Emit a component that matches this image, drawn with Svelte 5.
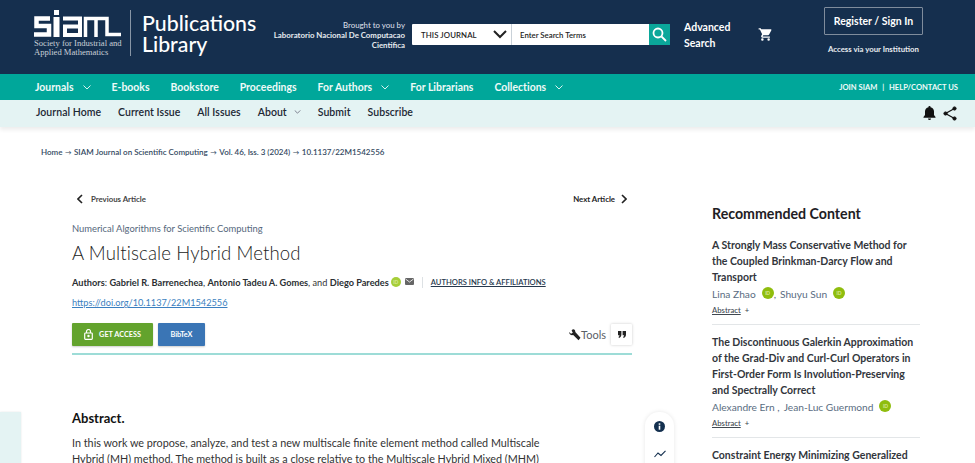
<script>
  const primary = [["Journals", true], ["E-books", false], ["Bookstore", false], ["Proceedings", false], ["For Authors", true], ["For Librarians", false], ["Collections", true]];
  const secondary = [["Journal Home", false], ["Current Issue", false], ["All Issues", false], ["About", true], ["Submit", false], ["Subscribe", false]];
  const crumbs = ["Home", "SIAM Journal on Scientific Computing", "Vol. 46, Iss. 3 (2024)", "10.1137/22M1542556"];
  const recs = [
    { title: "A Strongly Mass Conservative Method for the Coupled Brinkman-Darcy Flow and Transport", authors: ["Lina Zhao", "Shuyu Sun"], ids: [true, true], sep: "," },
    { title: "The Discontinuous Galerkin Approximation of the Grad-Div and Curl-Curl Operators in First-Order Form Is Involution-Preserving and Spectrally Correct", authors: ["Alexandre Ern", "Jean-Luc Guermond"], ids: [false, true], sep: " ," }
  ];
</script>

<div class="page">
  <header class="top">
    <div class="logo">
      <svg width="88" height="27" viewBox="0 0 88 27" fill="none" stroke="#fff">
        <path d="M16 8.500H2.500V16H15V24.500H0" stroke-width="4.500"/>
        <rect x="19.500" y="7" width="6" height="20" fill="#fff" stroke="none"/>
        <rect x="20" y="0" width="5" height="5" fill="#fff" stroke="none"/>
        <path d="M29 8.500H46V25H31V16.500H46" stroke-width="4"/>
        <path d="M51.500 27V8.500H73V24.500H87M62 8.500V27" stroke-width="3.500"/>
      </svg>
      <div class="society">Society for Industrial and<br />Applied Mathematics</div>
    </div>
    <div class="product">Publications<br />Library</div>
    <div class="brought"><span>Brought to you by</span><b>Laboratorio Nacional De Computacao Cientifica</b></div>
    <form class="search">
      <div class="scope">THIS JOURNAL
        <svg width="14" height="9" viewBox="0 0 14 9" fill="none" stroke="#222" stroke-width="2"><path d="M1 1l6 6 6-6"/></svg>
      </div>
      <div class="term">Enter Search Terms</div>
      <div class="go">
        <svg width="15" height="15" viewBox="0 0 15 15" fill="none" stroke="#fff" stroke-width="1.800"><circle cx="6" cy="6" r="4.500"/><path d="M9.500 9.500L14 14"/></svg>
      </div>
    </form>
    <div class="advanced">Advanced<br />Search</div>
    <svg class="cart" width="15" height="15" viewBox="0 0 24 24" fill="#fff"><path d="M7 18a2 2 0 1 0 0 4 2 2 0 0 0 0-4zM1 2v2h2l3.600 7.600-1.400 2.400c-.7 1.300.3 3 1.800 3h12v-2H7.400l1.100-2h7.500c.8 0 1.400-.4 1.800-1L21.400 5c.4-.7-.1-1.500-.9-1.500H5.200L4.300 2H1zm16 16a2 2 0 1 0 0 4 2 2 0 0 0 0-4z"/></svg>
    <div class="account">
      <div class="register">Register / Sign In</div>
      <div class="inst">Access via your Institution</div>
    </div>
  </header>

  <nav class="primary">
    {#each primary as [label, caret]}
      <span class="pitem">{label}
        {#if caret}<svg width="8" height="5" viewBox="0 0 8 5" fill="none" stroke="#d8f2ef" stroke-width="1"><path d="M.5.500L4 4 7.500.500"/></svg>{/if}
      </span>
    {/each}
    <span class="util">JOIN SIAM <i>|</i> HELP/CONTACT US</span>
  </nav>

  <nav class="secondary">
    {#each secondary as [label, caret]}
      <span class="sitem">{label}
        {#if caret}<svg width="7" height="4" viewBox="0 0 8 5" fill="none" stroke="#667" stroke-width="1"><path d="M.5.500L4 4 7.500.500"/></svg>{/if}
      </span>
    {/each}
    <span class="sicons">
      <svg width="13" height="14" viewBox="0 0 13 14" fill="#111"><path d="M6.500 0a1 1 0 0 1 1 1.200C9.700 1.700 11 3.500 11 5.500V9l1.500 2v.8H.5V11L2 9V5.500c0-2 1.300-3.800 3.500-4.300A1 1 0 0 1 6.500 0zM5 12.500h3a1.500 1.500 0 0 1-3 0z"/></svg>
      <svg width="14" height="15" viewBox="0 0 14 15" fill="#111" stroke="#111"><circle cx="11.500" cy="2.500" r="1.600"/><circle cx="2.500" cy="7.500" r="1.600"/><circle cx="11.500" cy="12.500" r="1.600"/><path d="M11.500 2.500L2.500 7.500 11.500 12.500" fill="none" stroke-width="1.200"/></svg>
    </span>
  </nav>

  <div class="crumbs">
    {#each crumbs as crumb, i}
      {#if i > 0}<span class="arrow">→</span>{/if}<span>{crumb}</span>
    {/each}
  </div>

  <div class="columns">
    <main class="article">
      <div class="pager">
        <span class="pg"><svg width="6" height="10" viewBox="0 0 6 10" fill="none" stroke="#222" stroke-width="1.600"><path d="M5 1L1 5l4 4"/></svg><b class="prev">Previous Article</b></span>
        <span class="pg"><b class="next">Next Article</b><svg width="6" height="10" viewBox="0 0 6 10" fill="none" stroke="#222" stroke-width="1.600"><path d="M1 1l4 4-4 4"/></svg></span>
      </div>
      <div class="section">Numerical Algorithms for Scientific Computing</div>
      <h1>A Multiscale Hybrid Method</h1>
      <div class="authors">
        <b>Authors</b>: <b>Gabriel R. Barrenechea</b>, <b>Antonio Tadeu A. Gomes</b>, and <b>Diego Paredes</b>
        <span class="orcid small">iD</span>
        <svg class="mail" width="9" height="7" viewBox="0 0 9 7"><rect width="9" height="7" rx="1" fill="#666"/><path d="M.5 1l4 3 4-3" fill="none" stroke="#fff" stroke-width=".8"/></svg>
        <span class="sep"></span>
        <span class="affil">AUTHORS INFO &amp; AFFILIATIONS</span>
      </div>
      <div class="doi">https://doi.org/10.1137/22M1542556</div>
      <div class="actions">
        <span class="btn access">
          <svg width="9" height="11" viewBox="0 0 9 11" fill="none" stroke="#fff" stroke-width="1.200"><rect x=".7" y="4" width="7.600" height="6.300" rx=".8"/><path d="M2.500 4V2.500a2 2 0 0 1 4 0V4"/><circle cx="4.500" cy="7" r=".6"/></svg>
          GET ACCESS
        </span>
        <span class="btn bib">BibTeX</span>
        <span class="tools">
          <svg width="12" height="12" viewBox="0 0 12 12" fill="#222"><path d="M.2 3L2 4.800l1.800-1L2.600 1.500 3.800.3C5.300 0 6.500 1.200 6.300 3l5.200 5.800-2 2.500L4.200 6C2 6.600 0 5 .2 3z"/></svg>Tools
        </span>
        <span class="quote">
          <svg width="8" height="7" viewBox="0 0 8 7" fill="#222"><path d="M0 0h3.400v3.500C3.400 5.200 2.400 6.500 1 7L.5 6c.7-.4 1-1 1-1.800H0zM4.600 0H8v3.500C8 5.200 7 6.500 5.600 7l-.5-1c.7-.4 1-1 1-1.800H4.600z"/></svg>
        </span>
      </div>
      <div class="rule"></div>
      <h2>Abstract.</h2>
      <p>In this work we propose, analyze, and test a new multiscale finite element method called Multiscale Hybrid (MH) method. The method is built as a close relative to the Multiscale Hybrid Mixed (MHM) method and shares the same theoretical foundations.</p>
    </main>

    <aside class="side">
      <h3>Recommended Content</h3>
      {#each recs as rec}
        <article class="rec">
          <div class="rtitle">{rec.title}</div>
          <div class="rauth">
            {#each rec.authors as a, i}
              {#if i > 0}<span class="comma">{rec.sep}</span>{/if}<span>{a}</span>{#if rec.ids[i]}<span class="orcid">iD</span>{/if}
            {/each}
          </div>
          <div class="rabs"><u>Abstract</u> <span>+</span></div>
        </article>
      {/each}
      <div class="rtitle">Constraint Energy Minimizing Generalized Multiscale Finite Element Method</div>
    </aside>
  </div>

  <div class="leftTab"></div>
  <div class="rail">
    <svg width="11" height="11" viewBox="0 0 11 11"><circle cx="5.500" cy="5.500" r="5.500" fill="#14304f"/><rect x="4.700" y="4.700" width="1.600" height="4" fill="#fff"/><rect x="4.700" y="2.300" width="1.600" height="1.500" fill="#fff"/></svg>
    <svg width="12" height="8" viewBox="0 0 12 8" fill="none" stroke="#14304f" stroke-width="1.100"><path d="M.5 7L4 3l3 2.500L11.500.8"/></svg>
  </div>
</div>

<style>
  :global(body) { margin: 0; background: #fff; overflow: hidden; }
  .page { width: 975px; height: 463px; overflow: hidden; position: relative; font-family: "Lato", "Noto Sans", sans-serif; color: #222; }

  .top { height: 74px; box-sizing: border-box; background: #152f4e; color: #fff; display: flex; align-items: flex-start; position: relative; }
  .logo { margin: 10px 0 0 34px; width: 97px; height: 46px; box-sizing: border-box; border-right: 1px solid #8896a6; }
  .logo svg { display: block; }
  .society { font-family: "Liberation Serif", serif; font-size: 8.600px; line-height: 8.500px; color: #c9d0d8; margin-top: 2px; white-space: nowrap; }
  .product { margin: 13px 0 0 11px; font-size: 21.300px; line-height: 21px; font-weight: 500; width: 116px; }
  .brought { margin: 21px 0 0 10px; width: 137px; text-align: right; font-size: 7.850px; line-height: 9.800px; display: flex; flex-direction: column; align-items: flex-end; }
  .brought b { font-weight: 700; color: #e6ebf0; width: 137px; }
  .brought span { color: #d5dbe3; font-weight: 500; }
  .search { margin: 24px 0 0 7px; width: 258px; height: 21px; display: flex; background: #fff; color: #222; font-size: 7.800px; font-weight: 600; align-items: stretch; border-radius: 1px; }
  .scope { width: 100px; box-sizing: border-box; padding: 0 4px 0 9px; display: flex; justify-content: space-between; align-items: center; border-right: 1px solid #c9d1d8; letter-spacing: .1px; }
  .term { flex: 1; display: flex; align-items: center; padding-left: 8px; }
  .go { width: 21px; background: #0ba79a; display: flex; align-items: center; justify-content: center; }
  .advanced { margin: 19px 0 0 14px; font-size: 10.500px; line-height: 16px; font-weight: 700; width: 74px; }
  .cart { margin-top: 27px; }
  .account { margin: 7px 0 0 51px; width: 99px; text-align: center; }
  .register { box-sizing: border-box; height: 28px; line-height: 27px; border: 1px solid #7f8c9c; font-size: 10.500px; font-weight: 700; border-radius: 1px; }
  .inst { margin-top: 9px; font-size: 7.800px; font-weight: 700; color: #e8ecf0; white-space: nowrap; }

  .primary { height: 26px; background: #00a79a; color: #eefaf8; display: flex; align-items: center; padding: 0 17px 0 35px; gap: 21px; font-size: 10.400px; letter-spacing: .03px; font-weight: 700; }
  .pitem { display: flex; align-items: center; gap: 7px; white-space: nowrap; }
  .pitem svg { margin: 1px 0 0 2px; }
  .util { margin-left: auto; font-size: 7.600px; font-weight: 700; letter-spacing: 0; }
  .util i { font-style: normal; margin: 0 3px; }

  .secondary { height: 27px; box-sizing: border-box; padding: 0 18px 3px 36px; background: #e4f3f3; display: flex; align-items: center; gap: 17px; font-size: 10.500px; letter-spacing: .04px; font-weight: 600; color: #1c2733; box-shadow: 0 3px 4px rgba(0,0,0,.07); position: relative; }
  .sitem { display: flex; align-items: center; gap: 7px; white-space: nowrap; }
  .sicons { margin-left: auto; display: flex; gap: 7px; align-items: center; transform: translateY(1px); }

  .crumbs { margin: 20px 0 0 41px; height: 10px; display: flex; align-items: center; gap: 2.500px; font-size: 8px; font-weight: 600; color: #344a62; white-space: nowrap; }
  .arrow { font-size: 6.500px; }

  .columns { display: grid; grid-template-columns: 560px 222px; column-gap: 80px; margin: 35px 0 0 72px; }
  .pager { display: flex; justify-content: space-between; padding: 0 5px; height: 14px; align-items: center; font-size: 7.800px; color: #3b3f45; }
  .pg { display: flex; align-items: center; gap: 8px; }
  .pg b { font-weight: 700; }
  .pg .next { color: #222; margin-right: -2px; }
  .pg .prev { color: #444; }
  .section { margin-top: 16px; font-size: 9.400px; line-height: 14px; color: #55677c; }
  h1 { margin: 3px 0 0; font-size: 18.600px; line-height: 28px; font-weight: 300; color: #222; letter-spacing: .12px; }
  .authors { margin-top: 8px; height: 14px; display: flex; align-items: center; font-size: 9.200px; white-space: pre; color: #333; }
  .authors b { font-weight: 700; color: #2b2f33; }
  .orcid { display: inline-flex; width: 12px; height: 12px; border-radius: 50%; background: #8fbd0e; color: #d7e89a; font-size: 5px; font-weight: 700; align-items: center; justify-content: center; margin: 0 0 3px 6px; }
  .orcid.small { background: #a6ce39; margin: 0 0 0 2px; width: 10px; height: 10px; }
  .mail { margin-left: 4px; margin-bottom: 2px; }
  .sep { width: 1px; height: 11px; background: #dde1e4; margin: 0 8px; }
  .affil { font-size: 7.600px; font-weight: 600; text-decoration: underline; color: #26384d; }
  .doi { margin-top: 7px; font-size: 9.200px; line-height: 14px; color: #3b7fc0; text-decoration: underline; }
  .actions { margin-top: 13px; height: 23px; display: flex; align-items: center; gap: 5px; }
  .btn { height: 23px; display: flex; align-items: center; justify-content: center; color: #fff; font-size: 7.300px; font-weight: 700; border-radius: 1px; box-shadow: 0 1px 2px rgba(0,0,0,.2); }
  .access { width: 81px; gap: 6px; background: #63a32d; }
  .bib { width: 47px; background: #3a75b5; }
  .tools { margin-left: auto; display: flex; align-items: center; font-size: 11px; color: #5a6066; font-weight: 400; }
  .quote { width: 21px; height: 21px; background: #fff; box-shadow: 0 0 3px rgba(0,0,0,.22); display: flex; justify-content: center; align-items: center; border-radius: 1px; }
  .rule { height: 2px; background: #9ddcd7; margin-top: 7px; }
  h2 { margin: 53px 0 0; font-size: 13px; line-height: 20px; font-weight: 700; color: #111; }
  p { margin: 7px 0 0; width: 490px; font-size: 10.800px; line-height: 16px; color: #333; }

  .side { margin-top: 13px; }
  h3 { margin: 0 0 14px; font-size: 14.200px; line-height: 18px; font-weight: 700; color: #1e2024; }
  .rec { padding-bottom: 7px; margin-bottom: 9px; border-bottom: 1px solid #e3e6e8; width: 208px; }
  .rtitle { font-size: 10.500px; line-height: 16px; font-weight: 700; color: #32363c; width: 208px; }
  .rauth { font-size: 10.200px; line-height: 16px; color: #5a6d82; display: flex; align-items: center; white-space: pre; margin-top: 1px; }
  .comma { margin-right: 4px; }
  .rabs { font-size: 7.700px; line-height: 14px; margin-top: 1px; color: #404850; font-weight: 500; }
  .rabs span { margin-left: 2px; }

  .leftTab { position: absolute; left: 0; top: 412px; width: 21px; height: 60px; background: #e4f3f3; box-shadow: 0 0 2px rgba(0,0,0,.1); }
  .rail { position: absolute; left: 645px; top: 412px; width: 29px; height: 70px; padding-top: 9px; box-sizing: border-box; display: flex; flex-direction: column; align-items: center; gap: 18px; background: #fff; border-radius: 14px; box-shadow: 0 0 4px rgba(0,0,0,.1); }
</style>
